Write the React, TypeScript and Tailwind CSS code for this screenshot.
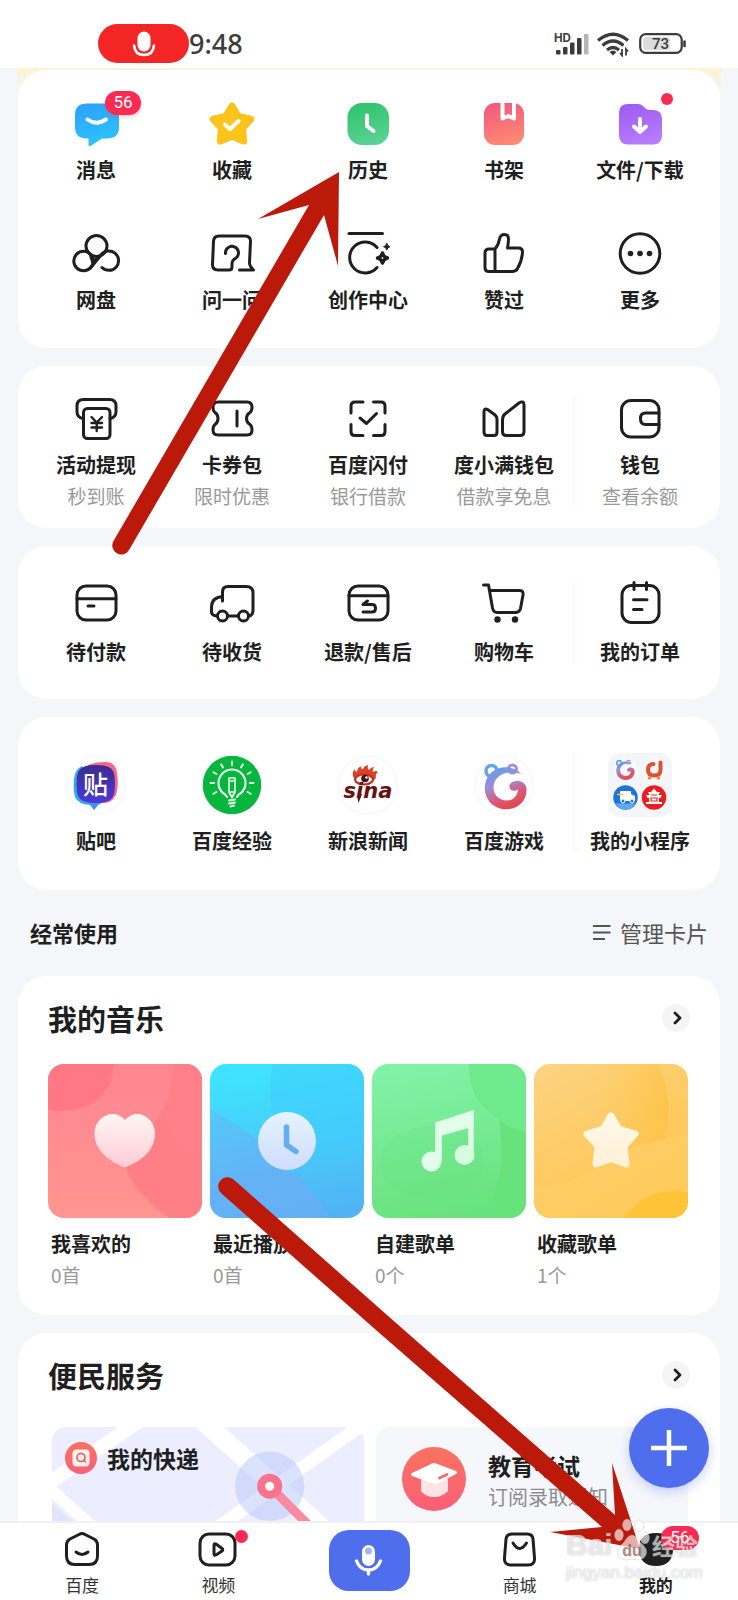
import type { ReactNode } from "react";

type Item = { label: string; sub?: string; icon: ReactNode; badge?: string; dot?: boolean };

function Line({ children }: { children: ReactNode }) {
  return (
    <svg
      viewBox="0 0 48 48"
      className="size-12 overflow-visible"
      fill="none"
      stroke="#1f1f1f"
      strokeWidth="3"
      strokeLinecap="round"
      strokeLinejoin="round"
      aria-hidden="true"
    >
      {children}
    </svg>
  );
}

function Solid({ id, from, to, children }: { id: string; from: string; to: string; children: ReactNode }) {
  return (
    <svg viewBox="0 0 48 48" className="size-12 overflow-visible" aria-hidden="true">
      <defs>
        <linearGradient id={id} x1="0.3" y1="0" x2="0.6" y2="1">
          <stop offset="0" stopColor={from} />
          <stop offset="1" stopColor={to} />
        </linearGradient>
      </defs>
      {children}
    </svg>
  );
}

const white = { fill: "none", stroke: "#fff", strokeLinecap: "round", strokeLinejoin: "round" } as const;

const shortcuts: Item[] = [
  {
    label: "消息",
    badge: "56",
    icon: (
      <Solid id="msg" from="#2ba3f8" to="#2ec4ff">
        <path d="M15 3.500H35Q47 3.500 47 15V27Q47 38.500 35 38.500H30L18.500 46Q17 46.500 16.500 45V38.500H15Q3 38.500 3 27V15Q3 3.500 15 3.500Z" fill="url(#msg)" />
        <path d="M15.500 19.500Q24.500 26 34 19.500" {...white} strokeWidth="4" />
      </Solid>
    ),
  },
  {
    label: "收藏",
    icon: (
      <Solid id="fav" from="#ffc22a" to="#fdc812">
        <path
          d="M24 6L30.200 16.500L42.800 19.100L34.500 28.200L35.700 41L24 36L12.300 41L13.500 28.200L5.200 19.100L17.800 16.500Z"
          fill="url(#fav)"
          stroke="#fdc31b"
          strokeWidth="7"
          strokeLinejoin="round"
        />
        <path d="M17 24.500L22 29L30.500 21" {...white} strokeWidth="4" />
      </Solid>
    ),
  },
  {
    label: "历史",
    icon: (
      <Solid id="his" from="#2ec36a" to="#5ad397">
        <rect x="3.500" y="3" width="41.500" height="42" rx="14.500" fill="url(#his)" />
        <path d="M23 15.500V26L29.500 31" {...white} strokeWidth="4" />
      </Solid>
    ),
  },
  {
    label: "书架",
    icon: (
      <Solid id="book" from="#f15b7d" to="#fe8a72">
        <rect x="4" y="3" width="40" height="42" rx="11" fill="url(#book)" />
        <path d="M22.500 3V18.500L28.500 16L34 18.500V3" fill="none" stroke="#fff" strokeWidth="4" strokeLinejoin="round" />
      </Solid>
    ),
  },
  {
    label: "文件/下载",
    dot: true,
    icon: (
      <Solid id="file" from="#a05cf4" to="#b87cfb">
        <path d="M12 4H22Q25 4 27 6L29 8Q31 10 34 10H37Q46 10 46 19V35Q46 44.500 37 44.500H12Q3 44.500 3 35V13Q3 4 12 4Z" fill="url(#file)" />
        <path d="M24 19V32M18 26.500L24 32L30 26.500" {...white} strokeWidth="4" />
      </Solid>
    ),
  },
  {
    label: "网盘",
    icon: (
      <Line>
        <path d="M17 26L22 28.500L28 26.500L20.500 36Z" fill="#1f1f1f" stroke="none" />
        <circle cx="24.500" cy="16" r="10.500" />
        <circle cx="11.500" cy="31" r="9.700" />
        <path d="M30 37.500A9.700 9.700 0 1 0 29 25L18.500 38" />
      </Line>
    ),
  },
  {
    label: "问一问",
    icon: (
      <Line>
        <path d="M17.500 23.500A6.500 6.500 0 1 1 28 28Q24 30 24 34V37Q24 40 21 40H10Q4.500 40 4.500 34.500L5.500 11Q6 6 11 6H37Q42.500 6 42.500 11L41.500 33Q41.500 36 45.500 40H31.500" />
      </Line>
    ),
  },
  {
    label: "创作中心",
    icon: (
      <Line>
        <path d="M5 3.500H38.500" />
        <path d="M33 17.500A15.500 15.500 0 1 0 33 37.500" />
        <path d="M38.500 23Q39.500 27 43.500 28Q39.500 29 38.500 33Q37.500 29 33.500 28Q37.500 27 38.500 23Z" strokeWidth="3.400" />
        <path d="M42.800 13.500Q43.300 16.200 46 16.700Q43.300 17.200 42.800 20Q42.300 17.200 39.600 16.700Q42.300 16.200 42.800 13.500Z" fill="#1f1f1f" strokeWidth="1" />
      </Line>
    ),
  },
  {
    label: "赞过",
    icon: (
      <Line>
        <path d="M15 19H9Q5 19 5 23V37.500Q5 41.500 9 41.500H32Q36 41.500 37.500 38.500Q42 31 42.500 22Q42.500 18 38.500 18H27.500Q28.500 13 28.500 9Q28.500 4.500 24.500 4.500Q20.500 4.500 19.500 9Q18.500 15 15 19V41" />
      </Line>
    ),
  },
  {
    label: "更多",
    icon: (
      <Line>
        <circle cx="24" cy="23.500" r="19.800" />
        <g fill="#1f1f1f" stroke="none">
          <circle cx="14.500" cy="23.500" r="2.800" />
          <circle cx="24" cy="23.500" r="2.800" />
          <circle cx="33.500" cy="23.500" r="2.800" />
        </g>
      </Line>
    ),
  },
];

const wallet: Item[] = [
  {
    label: "活动提现",
    sub: "秒到账",
    icon: (
      <Line>
        <path d="M11 23.500Q5 22.500 5 16.500V11Q5 4.500 11.500 4.500H37.500Q44 4.500 44 11V16.500Q44 22.500 38 23.500" />
        <rect x="11.500" y="13.500" width="26.500" height="30" rx="4" />
        <path d="M19.500 22L24.700 27.500L30 22M24.700 28V36M19.500 28H30M19.500 32.500H30" strokeWidth="2.400" />
      </Line>
    ),
  },
  {
    label: "卡券包",
    sub: "限时优惠",
    icon: (
      <Line>
        <path d="M10 7H39Q44 7 44 12Q44 16 42 17.500Q38.500 19.500 38.500 23.500T42 29.500Q44 31 44 35Q44 40 39 40H10Q5 40 5 35Q5 31 7 29.500Q10 27.500 10 23.500T7 17.500Q5 16 5 12Q5 7 10 7Z" />
        <path d="M29 16V31" />
      </Line>
    ),
  },
  {
    label: "百度闪付",
    sub: "银行借款",
    icon: (
      <Line>
        <path d="M19 7H11Q7 7 7 11V18M29.500 7H37Q41 7 41 11V18M19 40.500H11Q7 40.500 7 36.500V29.500M29.500 40.500H37Q41 40.500 41 36.500V29.500" />
        <path d="M16 23L22.500 28.500L32.500 18.500" />
      </Line>
    ),
  },
  {
    label: "度小满钱包",
    sub: "借款享免息",
    icon: (
      <Line>
        <path d="M4 17Q4 12.500 7.500 14.500L14.500 19.500Q17 21.500 17 24V37Q17 40.500 14 40.500H7Q4 40.500 4 37Z" />
        <path d="M22.500 25Q22.500 21 25 19L39 8Q44 5 44 10V36.500Q44 40.500 40 40.500H26.500Q22.500 40.500 22.500 36.500Z" />
      </Line>
    ),
  },
  {
    label: "钱包",
    sub: "查看余额",
    icon: (
      <Line>
        <rect x="5.500" y="5.500" width="37.500" height="36.500" rx="9.500" />
        <path d="M43 18H29.500Q24.500 18 24.500 23.700T29.500 29.500H43" />
      </Line>
    ),
  },
];

const orders: Item[] = [
  {
    label: "待付款",
    icon: (
      <Line>
        <rect x="5" y="6" width="39" height="34" rx="9" />
        <path d="M5 18.700H44M16 26H22" />
      </Line>
    ),
  },
  {
    label: "待收货",
    icon: (
      <Line>
        <path d="M14.500 21V12Q14.500 6.500 20 6.500H38Q45 6.500 45 13V30Q45 35.500 41 36M14.500 16.500Q3.500 17.500 3.500 27V32Q3.500 35.500 9 36M20 36H30.500" />
        <circle cx="14.500" cy="36" r="5" />
        <circle cx="35.500" cy="36" r="5" />
      </Line>
    ),
  },
  {
    label: "退款/售后",
    icon: (
      <Line>
        <rect x="5" y="6" width="39" height="34" rx="9" />
        <path d="M5 15.700H44M23.500 21L19 24.500H28Q31.500 24.500 31.500 28.200T28 32H19" />
      </Line>
    ),
  },
  {
    label: "购物车",
    icon: (
      <Line>
        <path d="M3.500 5H8.500L12.500 28Q13.500 32.500 17 32.500H36Q39.500 32.500 40.500 28.500L43 15Q43.500 10.500 40 10.500H10" />
        <circle cx="17.500" cy="39.500" r="3.200" fill="#1f1f1f" stroke="none" />
        <circle cx="35" cy="39.500" r="3.200" fill="#1f1f1f" stroke="none" />
      </Line>
    ),
  },
  {
    label: "我的订单",
    icon: (
      <Line>
        <rect x="6" y="5.500" width="37" height="37" rx="9.500" />
        <path d="M18 2.500V9.500M30.500 2.500V9.500M17.500 19.700H31M17.500 29.500H26" />
      </Line>
    ),
  },
];

function Bear({ id }: { id: string }) {
  return (
    <g>
      <defs>
        <linearGradient id={id} x1="0.2" y1="0" x2="0.6" y2="1">
          <stop offset="0" stopColor="#5fa0ea" />
          <stop offset="0.4" stopColor="#a08ad8" />
          <stop offset="0.75" stopColor="#df5570" />
          <stop offset="1" stopColor="#e4474c" />
        </linearGradient>
      </defs>
      <circle cx="17.500" cy="16" r="5.500" fill="#fff" stroke="#64a3e8" strokeWidth="3.500" />
      <circle cx="38.500" cy="14" r="4" fill="#fff" stroke="#a48fdc" strokeWidth="3" />
      <path
        d="M47.400 19C38 8 14 10 11 30C9 45 21 54.500 32 54.300C45 54 53 45 52.500 34C52 24 38 24 35.500 30C34.500 35 40 37.500 44 34.500C43.500 41 39 45.500 33 45.500C25 45.500 19.500 40 19.500 32C20 20 34 14 47.400 19Z"
        fill={`url(#${id})`}
      />
    </g>
  );
}

const rays = [0, 30, 150, 180, 210, 240, 270, 300, 330];

const apps: Item[] = [
  {
    label: "贴吧",
    icon: (
      <svg viewBox="0 0 60 60" className="size-15" aria-hidden="true">
        <defs>
          <linearGradient id="tb" x1="0" y1="0" x2="0" y2="1">
            <stop offset="0" stopColor="#3c2b8e" />
            <stop offset="1" stopColor="#4a3ad6" />
          </linearGradient>
        </defs>
        <circle cx="30" cy="30" r="29" fill="#fff" stroke="#f6f6f8" />
        <path d="M22 10Q30 6.500 41 7Q50 8 51 18Q53 30 50 40Q46 48 38 48L20 20Z" fill="#f4668e" />
        <path d="M8 24Q9 14 16 11L40 46L32 50L28 55L24 50Q12 49 9 42Q7 34 8 24Z" fill="#31a6f3" />
        <path d="M28 55L24 48H33Z" fill="#4690ea" />
        <path d="M22 10.500Q30 9.500 38 10.500Q47.500 12 48.500 21Q49.500 29 48.500 37Q47 46 38 47.500Q30 48.500 22 47.500Q12 46 11 37Q10 29 11 21Q12.500 12 22 10.500Z" fill="url(#tb)" />
        <text x="29.500" y="38.500" textAnchor="middle" fontSize="25" fontWeight="500" fill="#fff" fontFamily="Noto Sans CJK SC, sans-serif">
          贴
        </text>
      </svg>
    ),
  },
  {
    label: "百度经验",
    icon: (
      <svg viewBox="0 0 60 60" className="size-15" fill="none" stroke="#e9fbe9" strokeLinecap="round" strokeLinejoin="round" aria-hidden="true">
        <circle cx="30" cy="30" r="29.300" fill="#06b63e" stroke="none" />
        {rays.map((a) => (
          <path key={a} d="M48 28H51.500" strokeWidth="2" transform={`rotate(${a} 30 28)`} />
        ))}
        <path d="M25 42Q24.500 40 21 38Q16.500 34 16.500 28A13.500 13.500 0 0 1 43.500 28Q43.500 34 39 38Q35.500 40 35 42" strokeWidth="2.200" />
        <path d="M27 23H33V37L30 42.500L27 37ZM27 26H33M27 37H33" strokeWidth="1.700" />
        <path d="M27 45.500L33 44.500M27 48.500L33 47.500M28.500 51.500L32 50.500" strokeWidth="1.900" />
      </svg>
    ),
  },
  {
    label: "新浪新闻",
    icon: (
      <svg viewBox="0 0 60 60" className="size-15" aria-hidden="true">
        <circle cx="30" cy="30" r="29" fill="#fff" stroke="#f3f3f5" />
        <path d="M15 21Q14 17 17 14Q17 17 19 17Q19 13 23 11Q22 14 25 14Q26 11 30 10Q29 13 31 15Q33 12 36 12Q34 15 35 17Q38 15 40 17Q37 19 38 23L34 27Q26 19 17 25Z" fill="#dc4128" />
        <ellipse cx="26" cy="24.500" rx="9" ry="5" fill="#fff" stroke="#c3301f" strokeWidth="2.200" />
        <circle cx="27" cy="23.500" r="3.800" fill="#4a1414" />
        <circle cx="28.500" cy="22.500" r="1.200" fill="#fff" />
        <text x="30" y="43" textAnchor="middle" fontSize="21" fontWeight="700" fontStyle="italic" fill="#651313" fontFamily="DejaVu Sans, sans-serif">
          sina
        </text>
        <path d="M20 39H24L20.500 48Q19 44 20 39Z" fill="#651313" />
      </svg>
    ),
  },
  {
    label: "百度游戏",
    icon: (
      <svg viewBox="0 0 60 60" className="size-15" aria-hidden="true">
        <circle cx="30" cy="30" r="29" fill="#fff" stroke="#f3f4fa" />
        <Bear id="bear-large" />
      </svg>
    ),
  },
  {
    label: "我的小程序",
    icon: (
      <svg viewBox="0 0 64 64" className="size-16" aria-hidden="true">
        <rect width="64" height="64" rx="13" fill="#f4f5f9" />
        <circle cx="17.500" cy="16.500" r="12" fill="#f9fafc" />
        <circle cx="46" cy="16.500" r="12" fill="#f9fafc" />
        <g transform="translate(3.500 3) scale(0.44)">
          <Bear id="bear-small" />
        </g>
        <path d="M45.500 11Q40 11 40 16.500Q40 22.500 46 22.500Q52.500 22.500 52.500 17V9.500" fill="none" stroke="#e3502f" strokeWidth="4" strokeLinecap="round" strokeLinejoin="round" />
        <circle cx="41.500" cy="25" r="1.800" fill="#f08a3c" />
        <circle cx="50.500" cy="25" r="1.800" fill="#f08a3c" />
        <circle cx="17.500" cy="44.500" r="12.200" fill="#1e72dc" />
        <path d="M7.500 50.500H27.500Q24 56.700 17.500 56.700T7.500 50.500Z" fill="#63a8ef" />
        <path d="M12 38H23V41L27 43V48H12Z" fill="#fff" />
        <path d="M9 41.500H15" stroke="#f5c542" strokeWidth="1.500" />
        <circle cx="15" cy="48" r="2" fill="#1e72dc" stroke="#fff" />
        <circle cx="24" cy="48" r="2" fill="#1e72dc" stroke="#fff" />
        <circle cx="46" cy="44.500" r="12.200" fill="#ee1c1f" />
        <path d="M46 35.500L49 39H52L50.500 42H54L52.500 45H51V49H54V51H38V49H41V45H39.500L38 42H41.500L40 39H43Z" fill="#fff" />
        <path d="M43 42H49M43 45H49V48H43Z" stroke="#ee1c1f" strokeWidth="1.200" fill="none" />
      </svg>
    ),
  },
];

function Grid({ items, className, gap, divider }: { items: Item[]; className: string; gap: string; divider?: boolean }) {
  return (
    <section className={`grid grid-cols-5 rounded-[28px] bg-white pr-3 pl-2.5 ${className}`}>
      {items.map((it, i) => (
        <button
          key={it.label}
          type="button"
          className={`flex flex-col items-center whitespace-nowrap ${divider && i === 4 ? "bg-linear-to-r from-[#fcfcfe] to-white to-8%" : ""}`}
        >
          <span className={`relative flex min-h-12 items-center ${gap}`}>
            {it.icon}
            {it.badge && (
              <span className="absolute -top-[9px] left-[33px] flex h-6 w-9 items-center justify-center rounded-full bg-[#fb2a52] font-[Roboto,sans-serif] text-[17px] text-white shadow-[0_2px_4px_rgba(251,42,82,0.25)]">
                {it.badge}
              </span>
            )}
            {it.dot && <span className="absolute -top-[7px] left-[45px] size-3 rounded-full bg-[#fb2a52]" />}
          </span>
          <span className="text-[20px] leading-6 font-bold text-[#1f1f1f]">{it.label}</span>
          {it.sub && <span className="mt-[7px] text-[19px] leading-6 text-[#999]">{it.sub}</span>}
        </button>
      ))}
    </section>
  );
}

function CardTitle({ title }: { title: string }) {
  return (
    <div className="-mr-0.5 flex h-10 items-center justify-between">
      <h2 className="text-[29px] leading-[38px] font-bold text-[#1f1f1f]">{title}</h2>
      <button type="button" aria-label={title} className="flex size-7 items-center justify-center rounded-full bg-[#f5f5f5]">
        <svg viewBox="0 0 12 16" className="h-4 w-3" fill="none" stroke="#1f1f1f" strokeWidth="2.800" strokeLinecap="round" strokeLinejoin="round" aria-hidden="true">
          <path d="M5 3L10 8L5 13" />
        </svg>
      </button>
    </div>
  );
}

const music = [
  {
    label: "我喜欢的",
    count: "0首",
    art: (
      <>
        <defs>
          <linearGradient id="m1" x1="0" y1="0" x2="0" y2="1">
            <stop offset="0" stopColor="#ff8590" />
            <stop offset="1" stopColor="#ff9590" />
          </linearGradient>
          <linearGradient id="h1" x1="0" y1="0" x2="0" y2="1">
            <stop offset="0" stopColor="#fff5f3" />
            <stop offset="1" stopColor="#ffcbd7" />
          </linearGradient>
        </defs>
        <rect width="154" height="154" fill="url(#m1)" />
        <path d="M0 0H66Q64 30 40 42Q20 49 0 46Z" fill="#ff7884" />
        <path d="M125 0H154V154H122Q88 132 77 102L82 80Q127 50 125 0Z" fill="#ff7f86" />
        <path d="M116 54Q128 84 154 98V0H125Q124 34 116 54Z" fill="#ff8089" />
        <path d="M77 103.500C60 97 46.500 86 46.500 69C46.500 53 66 43 77 56C88 43 107 53 107 69C107 86 94 97 77 103.500Z" fill="url(#h1)" />
      </>
    ),
  },
  {
    label: "最近播放",
    count: "0首",
    art: (
      <>
        <defs>
          <linearGradient id="m2" x1="0.4" y1="0" x2="0.6" y2="1">
            <stop offset="0" stopColor="#3ee4ff" />
            <stop offset="1" stopColor="#50b4f4" />
          </linearGradient>
          <linearGradient id="m2b" x1="0.3" y1="0" x2="0.6" y2="1">
            <stop offset="0" stopColor="#58c4f8" />
            <stop offset="0.6" stopColor="#68aff5" />
          </linearGradient>
          <linearGradient id="h2" x1="0.5" y1="0" x2="0.5" y2="1">
            <stop offset="0" stopColor="#e4f3fe" />
            <stop offset="1" stopColor="#cfdcfd" />
          </linearGradient>
        </defs>
        <rect width="154" height="154" fill="url(#m2)" />
        <path d="M63 0H154V90Q110 105 78 74Q52 46 63 0Z" fill="#3fcdfa" opacity="0.45" />
        <path d="M0 45Q28 60 48 76Q62 104 88 112Q110 136 120 154H0Z" fill="url(#m2b)" opacity="0.85" />
        <circle cx="77" cy="77" r="29" fill="url(#h2)" />
        <path d="M76.500 63V81L86 87.500" fill="none" stroke="#62aef1" strokeWidth="5.500" strokeLinecap="round" strokeLinejoin="round" />
      </>
    ),
  },
  {
    label: "自建歌单",
    count: "0个",
    art: (
      <>
        <defs>
          <linearGradient id="m3" x1="0.3" y1="0" x2="0.5" y2="1">
            <stop offset="0" stopColor="#82f2a7" />
            <stop offset="1" stopColor="#68e27e" />
          </linearGradient>
        </defs>
        <rect width="154" height="154" fill="url(#m3)" />
        <path d="M97 0H154V68Q138 64 127 56Q96 36 97 0Z" fill="#6ee98c" />
        <path d="M127 56Q136 110 112 154H154V68Q138 64 127 56Z" fill="#68e37c" />
        <ellipse cx="60" cy="98" rx="52" ry="36" fill="#63e079" opacity="0.15" />
        <path d="M64 59L101 47V90H97V63L69 71V96H64Z" fill="#e2fdea" stroke="#e2fdea" strokeWidth="1.500" strokeLinejoin="round" />
        <circle cx="59.500" cy="97.500" r="10" fill="#e2fdea" />
        <circle cx="92.500" cy="91" r="10" fill="#d5fbe0" />
      </>
    ),
  },
  {
    label: "收藏歌单",
    count: "1个",
    art: (
      <>
        <defs>
          <linearGradient id="m4" x1="0" y1="0" x2="0.6" y2="1">
            <stop offset="0" stopColor="#fdd382" />
            <stop offset="1" stopColor="#fec54e" />
          </linearGradient>
          <linearGradient id="m4b" x1="0" y1="0" x2="1" y2="0.2">
            <stop offset="0.5" stopColor="#fdcb62" stopOpacity="0" />
            <stop offset="1" stopColor="#fdc54c" />
          </linearGradient>
          <linearGradient id="h4" x1="0" y1="0" x2="0" y2="1">
            <stop offset="0" stopColor="#fff8e6" />
            <stop offset="1" stopColor="#fff1da" />
          </linearGradient>
        </defs>
        <rect width="154" height="154" fill="url(#m4)" />
        <path d="M0 0H124Q142 40 130 77Q90 80 62 103Q34 122 0 123Z" fill="url(#m4b)" />
        <path d="M0 123Q34 122 62 103Q90 80 154 70V154H0Z" fill="#fed069" opacity="0.5" />
        <path d="M90 154Q112 122 154 128V154Z" fill="#fec438" />
        <path
          d="M77 52L84.500 65L101 70L90 82L92 100L77 94.500L62 100L64 82L53 70L69.500 65Z"
          fill="url(#h4)"
          stroke="url(#h4)"
          strokeWidth="7"
          strokeLinejoin="round"
        />
      </>
    ),
  },
];

function StatusBar() {
  return (
    <header className="flex h-[68px] shrink-0 items-center justify-between bg-white pt-[19px] pr-[52px] pl-[98px]">
      <div className="flex items-center">
        <span className="flex h-[39px] w-[91px] items-center justify-center rounded-full bg-[#f42525]">
          <svg viewBox="0 0 24 28" className="h-7 w-6" aria-hidden="true">
            <rect x="5.500" y="1.500" width="13" height="20" rx="6.500" fill="#fff" />
            <path d="M2 15.500Q3 25 12 25T22 15.500" fill="none" stroke="#fff" strokeWidth="2.600" strokeLinecap="round" />
          </svg>
        </span>
        <span className="font-['Noto_Sans',sans-serif] text-[27px] leading-8 font-medium text-[#3c3c3c]">9:48</span>
      </div>
      <svg viewBox="0 0 132 26" className="h-[26px] w-[132px]" aria-hidden="true">
        <text x="0" y="10.500" fontSize="11.500" fontWeight="700" fill="#3c3c3c" fontFamily="Inter, sans-serif">
          HD
        </text>
        <g fill="#3c3c3c">
          <rect x="2" y="19" width="4.500" height="4.500" rx="1" />
          <rect x="9" y="16" width="4.500" height="7.500" rx="1" />
          <rect x="16" y="11.500" width="4.500" height="12" rx="1" />
          <rect x="23" y="7" width="4.500" height="16.500" rx="1" />
          <rect x="30" y="3" width="4.500" height="20.500" rx="1" fill="#b5b5b5" />
        </g>
        <g fill="none" stroke="#3c3c3c" strokeWidth="3.200">
          <path d="M44 9.500Q59 -3 74 9.500" />
          <path d="M48.500 14.500Q59 5.500 69.500 14.500" />
          <path d="M53 19Q59 14 65 19" />
        </g>
        <path d="M55.500 21Q59 18 62.500 21L59 24.500Z" fill="#3c3c3c" />
        <path d="M68 18V24.500L66 22M72 24.500V18L74 20.500" fill="none" stroke="#fff" strokeWidth="4" />
        <path d="M68 18V24.500L66 22M72 24.500V18L74 20.500" fill="none" stroke="#3c3c3c" strokeWidth="1.800" />
        <rect x="86.200" y="3.200" width="41.500" height="18.600" rx="5.500" fill="none" stroke="#3c3c3c" strokeWidth="2.200" />
        <rect x="89" y="6" width="27" height="13" rx="3" fill="#dcdcdc" />
        <path d="M130.500 10.500V15" stroke="#3c3c3c" strokeWidth="2.600" strokeLinecap="round" />
        <text x="106.500" y="18" textAnchor="middle" fontSize="15" fontWeight="500" fill="#3c3c3c" fontFamily="Roboto, sans-serif">
          73
        </text>
      </svg>
    </header>
  );
}

function NavItem({ label, active, children }: { label: string; active?: boolean; children: ReactNode }) {
  return (
    <a href="#" className="flex flex-1 flex-col items-center pt-[7px]">
      <span className="relative">{children}</span>
      <span className={`mt-[3px] text-[17px] leading-6 ${active ? "font-bold text-[#1f1f1f]" : "text-[#333]"}`}>{label}</span>
    </a>
  );
}

function BottomNav() {
  const icon = "h-10 w-10 overflow-visible";
  const stroke = { fill: "none", stroke: "#1f1f1f", strokeWidth: 3, strokeLinecap: "round", strokeLinejoin: "round" } as const;
  return (
    <nav className="flex h-[79px] shrink-0 border-t-2 border-[#f0f0f2] bg-white px-3.5">
      <NavItem label="百度">
        <svg viewBox="0 0 40 40" className={icon} {...stroke} aria-hidden="true">
          <path d="M17 4.500Q20 2.500 23 4.500L32 9Q35.500 11 35.500 15V26Q35.500 34.500 27 34.500H13Q4.500 34.500 4.500 26V15Q4.500 11 8 9Z" />
          <path d="M14 22Q20 27 26 22" />
        </svg>
      </NavItem>
      <NavItem label="视频">
        <svg viewBox="0 0 40 40" className={icon} {...stroke} aria-hidden="true">
          <rect x="2" y="4" width="35" height="31" rx="9" />
          <path d="M16 15V24Q16 26 18 25L24 21Q25.500 19.700 24 18.500L18 14Q16 13 16 15Z" />
        </svg>
        <span className="absolute top-0 left-[37px] size-[13px] rounded-full bg-[#fb2a52]" />
      </NavItem>
      <button type="button" aria-label="语音搜索" className="mx-[42px] mt-[7px] flex h-[61px] w-[81px] shrink-0 items-center justify-center rounded-[20px] bg-[#4e6eee]">
        <svg viewBox="0 0 32 36" className="h-9 w-8" aria-hidden="true">
          <rect x="9" y="2" width="13" height="21" rx="6.500" fill="#fff" />
          <circle cx="15.500" cy="8" r="3.500" fill="#a5b4f6" />
          <path d="M3.500 18Q7 27 15.500 27T27.500 18M15.500 27V31" fill="none" stroke="#fff" strokeWidth="3.400" strokeLinecap="round" />
        </svg>
      </button>
      <NavItem label="商城">
        <svg viewBox="0 0 40 40" className={icon} {...stroke} aria-hidden="true">
          <path d="M12 4H27Q32.500 4 33 9L34.500 28Q35 35 28 35H11Q4 35 4.500 28L6 9Q6.500 4 12 4Z" />
          <path d="M13 13Q19.500 24 26.500 13" />
        </svg>
      </NavItem>
      <NavItem label="我的" active>
        <svg viewBox="0 0 40 40" className={icon} aria-hidden="true">
          <path d="M20 3C32 3 37 8 37 19S31 36 20 36S3 30 3 19S8 3 20 3Z" fill="#1f1f1f" />
        </svg>
        <span className="absolute -top-[4px] left-[25px] flex h-6 w-[38px] items-center justify-center rounded-full bg-[#fb2a52] font-[Roboto,sans-serif] text-[17px] text-white">
          56
        </span>
      </NavItem>
    </nav>
  );
}

function Services() {
  return (
    <div className="mt-8 grid grid-cols-2 gap-3">
      <a href="#" className="relative flex h-40 overflow-hidden rounded-[14px] bg-[#eceeff]">
        <svg viewBox="0 0 311 160" preserveAspectRatio="xMinYMin slice" className="absolute inset-0 h-full w-full" aria-hidden="true">
          <path d="M0 76L50 120V160H0Z" fill="#e0e4fc" />
          <g stroke="#fff" fill="none">
            <path d="M90 -8L-6 58" strokeWidth="14" />
            <path d="M-4 60L70 126" strokeWidth="12" />
            <path d="M146 -10L311 138" strokeWidth="19" />
            <path d="M320 -10L160 104" strokeWidth="13" />
          </g>
          <circle cx="217" cy="59" r="34.500" fill="#b7c5f8" opacity="0.5" />
          <path d="M217 59L262 104" stroke="#f88ba0" strokeWidth="9" />
          <circle cx="217" cy="59" r="8.500" fill="#fff" stroke="#f9738f" strokeWidth="8" />
        </svg>
        <span className="relative mt-[15px] flex h-8 items-center gap-2.5 pl-[13px]">
          <svg viewBox="0 0 32 32" className="size-8" aria-hidden="true">
            <defs>
              <linearGradient id="svc" x1="0" y1="0" x2="0" y2="1">
                <stop offset="0" stopColor="#f9725f" />
                <stop offset="1" stopColor="#fb5f76" />
              </linearGradient>
            </defs>
            <circle cx="16" cy="16" r="16" fill="url(#svc)" />
            <rect x="7.500" y="7.500" width="17" height="17" rx="4" fill="#fff1ee" />
            <circle cx="16" cy="15.500" r="4" fill="none" stroke="#ef5a58" strokeWidth="1.600" />
            <path d="M18.500 18L20.500 20" stroke="#ef5a58" strokeWidth="1.600" strokeLinecap="round" />
          </svg>
          <span className="text-[23px] leading-8 font-bold text-[#1f1f1f]">我的快递</span>
        </span>
      </a>
      <a href="#" className="flex h-40 items-start gap-[22px] rounded-[14px] bg-[#f6f7fb] pt-5 pl-[26px]">
        <svg viewBox="0 0 64 64" className="size-16 shrink-0" aria-hidden="true">
          <circle cx="32" cy="32" r="32" fill="url(#svc)" />
          <path d="M19 32H46V44Q40 50 32 50T19 44Z" fill="#ffe3e4" />
          <path d="M10 26L30 16.500Q32 15.500 34 16.500L54 24Q56 25.500 54 27L36 36.500Q34 37.500 31 36.500L10 29Q8 27.500 10 26Z" fill="#fff" />
          <path d="M37.500 31L45 27.500" stroke="#fa6869" strokeWidth="2.800" strokeLinecap="round" />
        </svg>
        <span className="flex flex-col gap-1 pt-0.5 whitespace-nowrap">
          <span className="text-[23px] leading-8 font-bold text-[#1f1f1f]">教育考试</span>
          <span className="text-[20px] leading-6 text-[#8c8c8c]">订阅录取通知</span>
        </span>
      </a>
    </div>
  );
}

export default function App() {
  return (
    <div className="relative flex h-screen flex-col overflow-hidden bg-[#f5f6fa] font-['Noto_Sans_CJK_SC',sans-serif]">
      <StatusBar />
      <main className="flex flex-1 flex-col gap-[18px] overflow-y-auto [scrollbar-width:none]">
        <div className="mx-[17px] shrink-0 bg-linear-to-b from-[#fdf3cf] from-0% to-[#f5f6fa] to-10% px-px pt-0.5">
          <Grid items={shortcuts} gap="mb-2.5" className="gap-y-12 pt-[30px] pb-9" />
        </div>
        <Grid items={wallet} gap="mb-2.5" className="mx-[18px] shrink-0 pt-[29px] pb-5" divider />
        <Grid items={orders} gap="mb-3" className="mx-[18px] shrink-0 pt-[34px] pb-[35px]" divider />
        <Grid items={apps} gap="h-16 mb-3" className="mx-[18px] shrink-0 pt-9 pb-[37px]" divider />
        <div className="flex h-[50px] shrink-0 items-start justify-between px-[30px] pt-1.5">
          <h2 className="text-[22px] leading-9 font-bold text-[#1f1f1f]">经常使用</h2>
          <button type="button" className="flex items-center gap-2 text-[22px] leading-9 text-[#555]">
            <svg viewBox="0 0 20 20" className="size-5" fill="none" stroke="#555" strokeWidth="2" aria-hidden="true">
              <path d="M1 4H18.500M1 10.500H18.500M1 17H13" />
            </svg>
            管理卡片
          </button>
        </div>
        <section className="mx-[18px] shrink-0 rounded-[28px] bg-white pt-[22px] pr-8 pb-7 pl-[30px]">
          <CardTitle title="我的音乐" />
          <div className="mt-[26px] grid grid-cols-4 gap-2">
            {music.map((m) => (
              <a href="#" key={m.label} className="flex flex-col">
                <svg viewBox="0 0 154 154" className="w-full rounded-2xl" aria-hidden="true">
                  {m.art}
                </svg>
                <span className="mt-3.5 pl-[3px] text-[20px] leading-6 font-bold text-[#1f1f1f]">{m.label}</span>
                <span className="mt-[7px] pl-[3px] text-[19px] leading-6 text-[#999]">{m.count}</span>
              </a>
            ))}
          </div>
        </section>
        <section className="mx-[18px] shrink-0 rounded-[28px] bg-white pt-[22px] pr-8 pb-8 pl-[30px]">
          <CardTitle title="便民服务" />
          <div className="pl-1">
            <Services />
          </div>
        </section>
      </main>
      <BottomNav />

      <button type="button" aria-label="添加" className="absolute right-[29px] bottom-28 flex size-20 items-center justify-center rounded-full bg-[#4e6eee] shadow-[0_4px_12px_rgba(78,110,238,0.3)]">
        <svg viewBox="0 0 40 40" className="size-10" stroke="#fff" strokeWidth="4.500" aria-hidden="true">
          <path d="M20 2V38M2 20H38" />
        </svg>
      </button>

      <svg viewBox="0 0 738 1600" className="pointer-events-none absolute inset-0 h-full w-full" fill="#bb190a" aria-hidden="true">
        <path d="M339 172L258 219L309 205L113.500 541A8.700 8.700 0 1 0 129 550L324 215L338 266Z" />
        <path d="M640 1549L612 1463L615 1515L404 1330L233 1179A9 9 0 0 0 222 1194L376 1330L602 1527L550 1532Z" />
      </svg>

      <div className="pointer-events-none absolute right-10 bottom-[17px] flex w-[132px] flex-col text-white/60 [text-shadow:0_0_2px_rgba(120,120,120,0.45)]">
        <span className="flex items-end justify-between leading-9 whitespace-nowrap">
          <span className="font-['Liberation_Sans',sans-serif] text-[30px] font-bold">Bai</span>
          <svg viewBox="0 0 38 46" className="h-[46px] w-[38px]" aria-hidden="true">
            <g fill="#fff" fillOpacity="0.65" stroke="#999" strokeOpacity="0.25">
              <ellipse cx="6" cy="18" rx="4.500" ry="6" />
              <ellipse cx="14" cy="8" rx="4.500" ry="6" />
              <ellipse cx="26" cy="9" rx="4.500" ry="6" />
              <ellipse cx="32" cy="21" rx="4.500" ry="6" />
              <path d="M19 18Q23 18 27 25Q36 32 33 38Q30 45 19 42Q8 45 5 38Q3 32 11 25Q15 18 19 18Z" />
            </g>
            <text x="19" y="39" textAnchor="middle" fontSize="16" fontWeight="700" fill="#8a4a44" fillOpacity="0.6" fontFamily="Liberation Sans, sans-serif">
              du
            </text>
          </svg>
          <span className="text-[23px] font-bold">经验</span>
        </span>
        <span className="font-['Liberation_Sans',sans-serif] text-[17px] leading-5">jingyan.baidu.com</span>
      </div>
    </div>
  );
}
